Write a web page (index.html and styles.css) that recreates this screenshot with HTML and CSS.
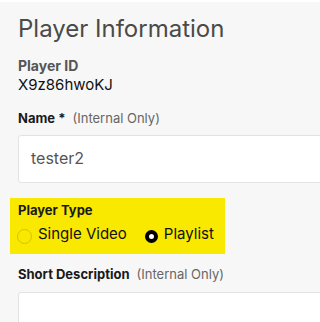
FILE: index.html
```html
<!DOCTYPE html>
<html lang="en">
<head>
<meta charset="utf-8">
<link rel="stylesheet" href="styles.css">
</head>
<body>
<main class="page">
  <h1 class="title">Player Information</h1>
  <section class="field id-field">
    <div class="label muted">Player ID</div>
    <div class="value">X9z86hwoKJ</div>
  </section>
  <section class="field name-field">
    <div class="label">Name * <span class="hint">(Internal Only)</span></div>
    <div class="input">tester2</div>
  </section>
  <section class="type-box">
    <div class="label">Player Type</div>
    <div class="radios">
      <span class="radio-item"><span class="radio"></span>Single Video</span>
      <span class="radio-item"><span class="radio checked"></span>Playlist</span>
    </div>
  </section>
  <section class="field desc-field">
    <div class="label">Short Description <span class="hint">(Internal Only)</span></div>
    <div class="input tall"></div>
  </section>
</main>
</body>
</html>
```

FILE: styles.css
```css
html, body {
  margin: 0;
  padding: 0;
  background: #f7f7f7;
  overflow: hidden;
}
body {
  border-top: 2px solid #ffffff;
  font-family: "Inter", "Noto Sans", sans-serif;
  color: #1a1a1a;
}
.page {
  padding: 0 0 0 18px;
}
.title {
  margin: 0;
  padding-top: 13px;
  font-size: 24px;
  line-height: 28px;
  font-weight: 400;
  color: #4a4a4a;
}
.field {
  margin: 0;
}
.label {
  font-size: 13px;
  line-height: 16px;
  font-weight: 700;
  color: #1a1a1a;
}
.label.muted {
  font-size: 14px;
  color: #555;
}
.hint {
  font-weight: 400;
  color: #666;
  margin-left: 4px;
}
.id-field {
  margin-top: 15px;
}
.value {
  font-size: 15px;
  line-height: 18px;
  margin-top: 2px;
  color: #111;
}
.name-field {
  margin-top: 16px;
}
.input {
  margin-top: 9px;
  width: 320px;
  height: 48px;
  box-sizing: border-box;
  background: #fff;
  border: 1px solid #e3e3e3;
  border-radius: 3px;
  padding-left: 12px;
  font-size: 16px;
  line-height: 45px;
  color: #555;
}
.type-box {
  margin: 15px 0 0 -8px;
  width: 215px;
  height: 56px;
  box-sizing: border-box;
  padding: 4px 0 0 8px;
  background: #f9e800;
}
.radios {
  display: flex;
  align-items: flex-start;
  gap: 18px;
  margin-top: 7px;
  font-size: 15px;
  line-height: 18px;
  color: #111;
}
.radio-item {
  display: flex;
  align-items: flex-start;
  gap: 6px;
}
.radio {
  flex: none;
  width: 15px;
  height: 15px;
  box-sizing: border-box;
  border-radius: 50%;
  border: 1px solid #d2c300;
  margin: 4px 0 0 -1px;
}
.radio.checked {
  width: 13px;
  height: 13px;
  border: 4px solid #000;
  background: #fff;
  margin: 5px 0 0 0;
}
.desc-field {
  margin-top: 12px;
}
.tall {
  height: 60px;
  margin-top: 10px;
}
```
